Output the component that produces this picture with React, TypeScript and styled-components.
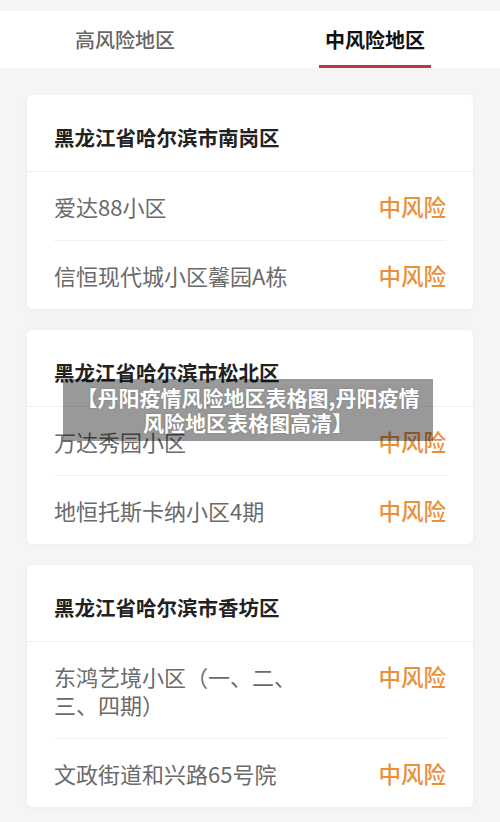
import styled, { createGlobalStyle } from 'styled-components'

const GlobalStyle = createGlobalStyle`
  html, body {
    margin: 0;
    padding: 0;
    background: #f5f5f5;
    font-family: "Noto Sans CJK SC", "Noto Sans", sans-serif;
  }
`

const Page = styled.div`
  position: relative;
  min-height: 822px;
  padding-top: 11px;
  box-sizing: border-box;
  background: #f5f5f5;
`

const TabBar = styled.div`
  display: flex;
  height: 57px;
  background: #ffffff;
`

const Tab = styled.div<{ $active?: boolean }>`
  position: relative;
  flex: 1;
  display: flex;
  align-items: center;
  justify-content: center;
  font-size: 20px;
  line-height: 28px;
  color: ${(p) => (p.$active ? '#111111' : '#666666')};
  font-weight: ${(p) => (p.$active ? 700 : 500)};

  /* barra vermelha do tab ativo */
  &::after {
    content: '';
    display: ${(p) => (p.$active ? 'block' : 'none')};
    position: absolute;
    bottom: 0;
    left: 50%;
    width: 112px;
    height: 3px;
    margin-left: -56px;
    background: #b93a44;
  }
`

const List = styled.div`
  display: flex;
  flex-direction: column;
  gap: 21px;
  padding: 27px 27px 15px;
`

const Card = styled.div`
  background: #ffffff;
  border-radius: 5px;
  box-shadow: 0 1px 6px rgba(0, 0, 0, 0.04);
`

const CardHeader = styled.div`
  padding: 28px 27px 20px;
  font-size: 20.5px;
  line-height: 28px;
  font-weight: 700;
  color: #222222;
  border-bottom: 1px solid #f0f0f0;
`

const Rows = styled.div`
  padding: 0 27px;
`

const Row = styled.div`
  display: flex;
  justify-content: space-between;
  align-items: flex-start;
  padding: 20px 0;
  & + & {
    border-top: 1px solid #f0f0f0;
  }
`

const Name = styled.div`
  max-width: 64%;
  font-size: 22px;
  line-height: 28px;
  color: #6a6a6a;
`

const Risk = styled.div`
  font-size: 22.5px;
  line-height: 28px;
  font-weight: 500;
  color: #e8913a;
`

const Banner = styled.div`
  position: absolute;
  top: 379px;
  left: 63px;
  width: 370px;
  height: 62px;
  box-sizing: border-box;
  padding-top: 6px;
  background: rgba(0, 0, 0, 0.4);
  color: #ffffff;
  font-size: 21px;
  line-height: 25px;
  font-weight: 700;
  text-align: center;
  text-shadow: 0 0 2px rgba(0, 0, 0, 0.25);
`

const areas = [
  {
    title: '黑龙江省哈尔滨市南岗区',
    items: ['爱达88小区', '信恒现代城小区馨园A栋'],
  },
  {
    title: '黑龙江省哈尔滨市松北区',
    items: ['万达秀园小区', '地恒托斯卡纳小区4期'],
  },
  {
    title: '黑龙江省哈尔滨市香坊区',
    items: ['东鸿艺境小区（一、二、三、四期）', '文政街道和兴路65号院'],
  },
]

export default function App() {
  return (
    <Page>
      <GlobalStyle />
      <TabBar>
        <Tab>高风险地区</Tab>
        <Tab $active>中风险地区</Tab>
      </TabBar>

      <List>
        {areas.map((area) => (
          <Card key={area.title}>
            <CardHeader>{area.title}</CardHeader>
            <Rows>
              {area.items.map((item) => (
                <Row key={item}>
                  <Name>{item}</Name>
                  <Risk>中风险</Risk>
                </Row>
              ))}
            </Rows>
          </Card>
        ))}
      </List>

      <Banner>
        【丹阳疫情风险地区表格图,丹阳疫情
        <br />
        风险地区表格图高清】
      </Banner>
    </Page>
  )
}
